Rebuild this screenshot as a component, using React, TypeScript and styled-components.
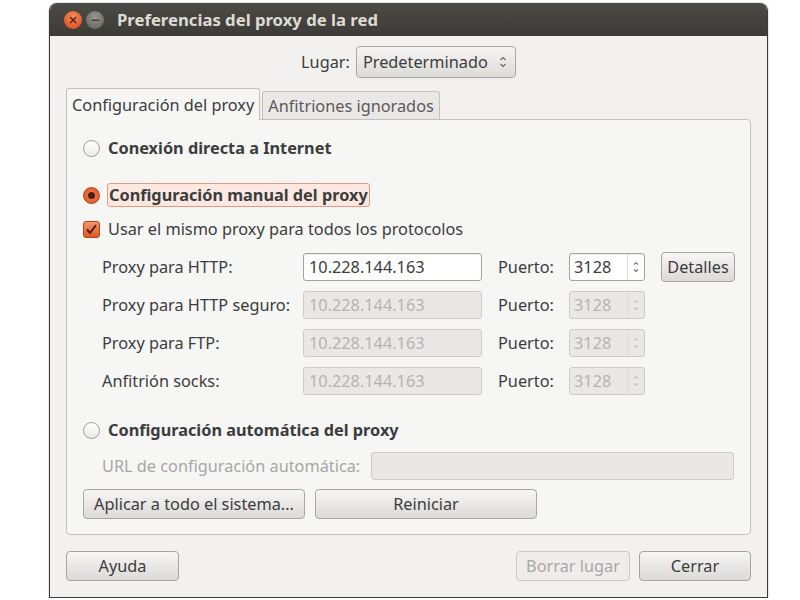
import React from "react";
import styled, { createGlobalStyle, css } from "styled-components";

const Global = createGlobalStyle`
  html, body { margin: 0; padding: 0; background: #ffffff; }
  body { font-family: "Noto Sans", "Open Sans", sans-serif; color: #3c3c3c; }
  * { box-sizing: border-box; }
`;

const FS = "16.3px";

const Window = styled.div`
  margin: 3px 0 0 49px;
  width: 719px;
  height: 595px;
  display: flex;
  flex-direction: column;
  border: 1px solid #3b3a36;
  border-top: none;
  border-radius: 8px 8px 0 0;
  overflow: hidden;
  box-shadow: 0 0 2px rgba(0,0,0,0.35);
`;

const TitleBar = styled.div`
  height: 33px;
  flex: none;
  display: flex;
  align-items: center;
  padding-left: 14px;
  gap: 4px;
  background: linear-gradient(#4b4a46, #3c3b37);
`;

const WinButton = styled.div<{ $kind: "close" | "min" }>`
  width: 18px;
  height: 18px;
  border-radius: 50%;
  display: flex;
  align-items: center;
  justify-content: center;
  font-family: "DejaVu Sans", sans-serif;
  font-size: 12px;
  font-weight: bold;
  line-height: 1;
  ${(p) =>
    p.$kind === "close"
      ? css`
          background: radial-gradient(circle at 50% 35%, #f7905e, #e2562a 70%);
          color: #5a2412;
        `
      : css`
          background: radial-gradient(circle at 50% 35%, #9a9893, #6f6d68 70%);
          color: #3c3b37;
        `}
`;

const Title = styled.div`
  margin-left: 9px;
  color: #dfdbd2;
  font-weight: bold;
  font-size: 16.7px;
`;

const Body = styled.div`
  flex: 1;
  background: #f2f1f0;
  display: flex;
  flex-direction: column;
  padding: 10px 16px 0 16px;
`;

const LugarRow = styled.div`
  display: flex;
  align-items: center;
  justify-content: center;
  gap: 6px;
  font-size: ${FS};
`;

const Combo = styled.div`
  width: 160px;
  height: 32px;
  border: 1px solid #a9a6a0;
  border-radius: 4px;
  background: linear-gradient(#f6f5f4, #dddbd8);
  display: flex;
  align-items: center;
  padding: 0 8px 0 6px;
  font-size: ${FS};
  justify-content: space-between;
`;

const Notebook = styled.div`
  margin-top: 10px;
  display: flex;
  flex-direction: column;
`;

const TabStrip = styled.div`
  display: flex;
  align-items: flex-end;
  gap: 2px;
  height: 31px;
`;

const Tab = styled.div<{ $active?: boolean }>`
  height: ${(p) => (p.$active ? 32 : 28)}px;
  padding: 0 5px;
  display: flex;
  align-items: center;
  font-size: ${FS};
  border: 1px solid #c4c1bc;
  border-bottom: none;
  border-radius: 3px 3px 0 0;
  margin-bottom: ${(p) => (p.$active ? -1 : 0)}px;
  position: relative;
  z-index: ${(p) => (p.$active ? 1 : 0)};
  background: ${(p) => (p.$active ? "#f6f6f5" : "#eae8e6")};
  color: ${(p) => (p.$active ? "#3c3c3c" : "#5a5a5a")};
`;

const Panel = styled.div`
  height: 416px;
  border: 1px solid #c4c1bc;
  border-radius: 0 4px 4px 4px;
  background: #f6f6f5;
  display: flex;
  flex-direction: column;
  padding: 16px 16px 0 16px;
`;

const OptionRow = styled.div<{ $mt?: number }>`
  display: flex;
  align-items: center;
  gap: 7px;
  height: 24px;
  margin-top: ${(p) => p.$mt ?? 0}px;
`;

const Radio = styled.div<{ $checked?: boolean }>`
  width: 17px;
  height: 17px;
  border-radius: 50%;
  flex: none;
  position: relative;
  ${(p) =>
    p.$checked
      ? css`
          background: radial-gradient(circle, #f08a5d, #dd4814);
          border: 1px solid #c2410f;
          &::after {
            content: "";
            position: absolute;
            left: 4px;
            top: 4px;
            width: 7px;
            height: 7px;
            border-radius: 50%;
            background: #4a2012;
          }
        `
      : css`
          background: linear-gradient(#ffffff, #ebeae8);
          border: 1px solid #9e9b96;
        `}
`;

const OptionLabel = styled.span<{ $bold?: boolean; $focus?: boolean }>`
  font-size: ${FS};
  font-weight: ${(p) => (p.$bold ? "bold" : "normal")};
  padding: 0 1px;
  ${(p) =>
    p.$focus &&
    css`
      border: 1px solid #e49a7d;
      border-radius: 3px;
      background: #fbe9e1;
    `}
`;

const Check = styled.div`
  width: 17px;
  height: 17px;
  border-radius: 3px;
  background: linear-gradient(#f2956b, #dd5a28);
  border: 1px solid #c2410f;
  flex: none;
  display: flex;
  align-items: center;
  justify-content: center;
`;

const Grid = styled.div`
  margin-top: 12px;
  margin-left: 19px;
  display: grid;
  grid-template-columns: 201px 179px 87px 76px 16px 74px;
  grid-auto-rows: 28px;
  row-gap: 10px;
  align-items: center;
  font-size: ${FS};
`;

const FieldLabel = styled.span<{ $indent?: number; $dim?: boolean }>`
  padding-left: ${(p) => p.$indent ?? 0}px;
  color: ${(p) => (p.$dim ? "#a8a7a5" : "#3c3c3c")};
`;

const Entry = styled.div<{ $disabled?: boolean; $w?: number }>`
  height: 28px;
  ${(p) => p.$w && `width: ${p.$w}px;`}
  border: 1px solid ${(p) => (p.$disabled ? "#cfccc8" : "#a6a39e")};
  border-radius: 3px;
  background: ${(p) => (p.$disabled ? "#e9e8e6" : "#ffffff")};
  color: ${(p) => (p.$disabled ? "#b5b4b2" : "#3c3c3c")};
  display: flex;
  align-items: center;
  padding: 0 5px;
  font-size: ${FS};
  box-shadow: ${(p) => (p.$disabled ? "none" : "inset 0 1px 1px rgba(0,0,0,0.08)")};
`;

const Spin = styled(Entry)`
  padding: 0 0 0 4px;
  justify-content: space-between;
`;

const SpinArrows = styled.div<{ $disabled?: boolean }>`
  width: 17px;
  height: 100%;
  border-left: 1px solid ${(p) => (p.$disabled ? "#dedcd9" : "#e2e0dd")};
  display: flex;
  align-items: center;
  justify-content: center;
`;

const Button = styled.div<{ $w: number; $disabled?: boolean; $h?: number }>`
  width: ${(p) => p.$w}px;
  height: ${(p) => p.$h ?? 30}px;
  border: 1px solid ${(p) => (p.$disabled ? "#cdcac6" : "#a8a5a0")};
  border-radius: 4px;
  background: ${(p) =>
    p.$disabled ? "#eeedeb" : "linear-gradient(#f7f6f5, #dcdad7)"};
  color: ${(p) => (p.$disabled ? "#a9a8a6" : "#3c3c3c")};
  display: flex;
  align-items: center;
  justify-content: center;
  font-size: ${FS};
  flex: none;
`;

const UrlRow = styled.div`
  margin-top: 10px;
  margin-left: 19px;
  display: flex;
  align-items: center;
  height: 28px;
  font-size: ${FS};
  justify-content: space-between;
`;

const ActionRow = styled.div`
  margin-top: 9px;
  display: flex;
  gap: 10px;
`;

const Footer = styled.div`
  margin-top: 16px;
  display: flex;
  align-items: center;
  gap: 9px;
`;

const Spacer = styled.div`
  flex: 1;
`;

const Arrows = ({ color }: { color: string }) => (
  <svg width="8" height="14" viewBox="0 0 8 14">
    <path d="M1.5 5 L4 2.5 L6.5 5" fill="none" stroke={color} strokeWidth="1.2" />
    <path d="M1.5 9 L4 11.5 L6.5 9" fill="none" stroke={color} strokeWidth="1.2" />
  </svg>
);

const SpinArrowIcon = ({ color }: { color: string }) => (
  <svg width="8" height="16" viewBox="0 0 8 16">
    <path d="M2 5.5 L4 3.5 L6 5.5" fill="none" stroke={color} strokeWidth="1.1" />
    <path d="M2 10.5 L4 12.5 L6 10.5" fill="none" stroke={color} strokeWidth="1.1" />
  </svg>
);

const rows = [
  { label: "Proxy para HTTP:", enabled: true },
  { label: "Proxy para HTTP seguro:", enabled: false },
  { label: "Proxy para FTP:", enabled: false },
  { label: "Anfitrión socks:", enabled: false },
];

export default function App() {
  return (
    <>
      <Global />
      <Window>
        <TitleBar>
          <WinButton $kind="close">×</WinButton>
          <WinButton $kind="min">−</WinButton>
          <Title>Preferencias del proxy de la red</Title>
        </TitleBar>
        <Body>
          <LugarRow>
            <span>Lugar:</span>
            <Combo>
              <span>Predeterminado</span>
              <Arrows color="#6a6864" />
            </Combo>
          </LugarRow>
          <Notebook>
            <TabStrip>
              <Tab $active>Configuración del proxy</Tab>
              <Tab>Anfitriones ignorados</Tab>
            </TabStrip>
            <Panel>
              <OptionRow>
                <Radio />
                <OptionLabel $bold>Conexión directa a Internet</OptionLabel>
              </OptionRow>
              <OptionRow $mt={23}>
                <Radio $checked />
                <OptionLabel $bold $focus>
                  Configuración manual del proxy
                </OptionLabel>
              </OptionRow>
              <OptionRow $mt={10}>
                <Check>
                  <svg width="13" height="13" viewBox="0 0 13 13">
                    <path d="M2 6.5 L5 10 L11 2" fill="none" stroke="#4a2012" strokeWidth="2" />
                  </svg>
                </Check>
                <OptionLabel>Usar el mismo proxy para todos los protocolos</OptionLabel>
              </OptionRow>
              <Grid>
                {rows.map((r) => (
                  <React.Fragment key={r.label}>
                    <FieldLabel>{r.label}</FieldLabel>
                    <Entry $disabled={!r.enabled}>10.228.144.163</Entry>
                    <FieldLabel $indent={16}>Puerto:</FieldLabel>
                    <Spin $disabled={!r.enabled}>
                      <span>3128</span>
                      <SpinArrows $disabled={!r.enabled}>
                        <SpinArrowIcon color={r.enabled ? "#7a7874" : "#c8c6c3"} />
                      </SpinArrows>
                    </Spin>
                    <span />
                    {r.enabled ? <Button $w={74}>Detalles</Button> : <span />}
                  </React.Fragment>
                ))}
              </Grid>
              <OptionRow $mt={23}>
                <Radio />
                <OptionLabel $bold>Configuración automática del proxy</OptionLabel>
              </OptionRow>
              <UrlRow>
                <FieldLabel $dim>URL de configuración automática:</FieldLabel>
                <Entry $disabled $w={363} />
              </UrlRow>
              <ActionRow>
                <Button $w={222}>Aplicar a todo el sistema...</Button>
                <Button $w={222}>Reiniciar</Button>
              </ActionRow>
            </Panel>
          </Notebook>
          <Footer>
            <Button $w={113}>Ayuda</Button>
            <Spacer />
            <Button $w={114} $disabled>Borrar lugar</Button>
            <Button $w={112}>Cerrar</Button>
          </Footer>
        </Body>
      </Window>
    </>
  );
}
